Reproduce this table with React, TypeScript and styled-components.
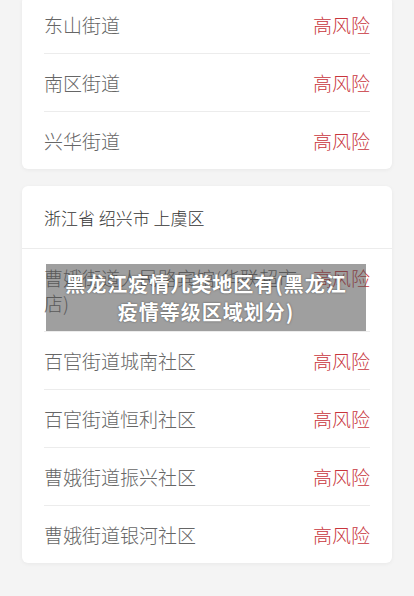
import React from "react";
import styled, { createGlobalStyle } from "styled-components";

const Global = createGlobalStyle`
  html, body { margin: 0; padding: 0; background: #f4f4f4; }
  body { font-family: "Noto Sans CJK SC", "Noto Sans", sans-serif; overflow: hidden; }
`;

const Page = styled.div`
  position: relative;
  width: 414px;
  height: 596px;
  overflow: hidden;
  background: #f4f4f4;
  padding: 0 22px;
  box-sizing: border-box;
  display: flex;
  flex-direction: column;
  gap: 17px;
`;

const Card = styled.div<{ $offset?: number }>`
  background: #fff;
  border-radius: 6px;
  box-shadow: 0 1px 4px rgba(0, 0, 0, 0.05);
  margin-top: ${(p) => p.$offset ?? 0}px;
  display: flex;
  flex-direction: column;
`;

const Header = styled.div`
  height: 62px;
  border-bottom: 1px solid #ececec;
  display: flex;
  align-items: center;
  padding: 0 22px;
  font-size: 17px;
  color: #333;
  font-weight: 300;
`;

const List = styled.div`
  padding: 0 22px;
  display: flex;
  flex-direction: column;
`;

const Row = styled.div`
  display: flex;
  align-items: flex-start;
  justify-content: space-between;
  gap: 10px;
  padding: 16px 0;
  border-bottom: 1px solid #ececec;
  &:last-child { border-bottom: none; }
`;

const Name = styled.div`
  flex: 1;
  font-size: 19px;
  line-height: 25px;
  color: #666;
  font-weight: 300;
`;

const Level = styled.div`
  flex: none;
  font-size: 19px;
  line-height: 25px;
  color: #c8353c;
  font-weight: 300;
`;

const Overlay = styled.div`
  position: absolute;
  left: 46px;
  top: 264px;
  width: 320px;
  height: 67px;
  background: rgba(80, 80, 80, 0.55);
  display: flex;
  flex-direction: column;
  align-items: center;
  justify-content: center;
  text-align: center;
`;

const TitleLine = styled.div`
  color: #fff;
  font-size: 20px;
  line-height: 28px;
  font-weight: 700;
  letter-spacing: 1px;
  white-space: nowrap;
  text-shadow: 0 0 2px rgba(0, 0, 0, 0.5);
`;

const top = ["东山街道", "南区街道", "兴华街道"];
const bottom = [
  "曹娥街道人民路宾馆(华联超市店)",
  "百官街道城南社区",
  "百官街道恒利社区",
  "曹娥街道振兴社区",
  "曹娥街道银河社区",
];

export default function App() {
  return (
    <Page>
      <Global />
      <Card $offset={-4}>
        <List>
          {top.map((n) => (
            <Row key={n}>
              <Name>{n}</Name>
              <Level>高风险</Level>
            </Row>
          ))}
        </List>
      </Card>
      <Card>
        <Header>浙江省 绍兴市 上虞区</Header>
        <List>
          {bottom.map((n) => (
            <Row key={n}>
              <Name>{n}</Name>
              <Level>高风险</Level>
            </Row>
          ))}
        </List>
      </Card>
      <Overlay>
        <TitleLine>黑龙江疫情几类地区有(黑龙江</TitleLine>
        <TitleLine>疫情等级区域划分)</TitleLine>
      </Overlay>
    </Page>
  );
}
